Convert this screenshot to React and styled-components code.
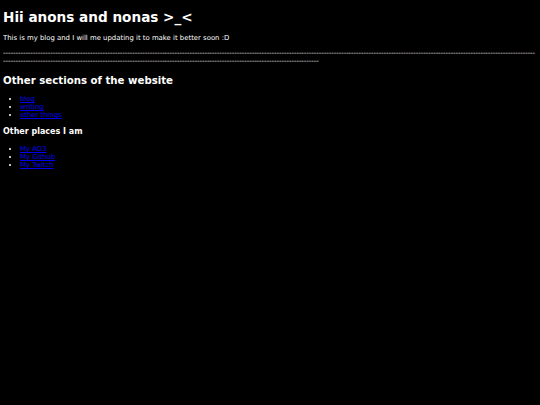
import * as React from 'react';
import styled, { createGlobalStyle } from 'styled-components';

const GlobalStyle = createGlobalStyle`
  html, body {
    background: #000;
  }
  body {
    margin: 3px;
    color: #fff;
    font-family: "DejaVu Sans", Verdana, sans-serif;
    font-size: 6.9px;
  }
`;

const Title = styled.h1`
  font-size: 13.6px;
  margin: 6px 0 9px;
`;

const Section = styled.h2`
  font-size: 10.2px;
  margin: 10px 0 9.2px;
`;

const SubSection = styled.h3`
  font-size: 8px;
  margin: 8px 0 9px;
`;

const Text = styled.p`
  margin: 1em 0;
`;

const Divider = styled.p`
  margin: 1em 0;
  word-break: break-all;
`;

const LinkList = styled.ul`
  margin: 1em 0;
  padding-left: 17px;
`;

const Item = styled.li`
  a {
    color: #0000ee;
  }
`;

const dashes = '-'.repeat(341);

const App = () => {
    return(
        <>
            <GlobalStyle />
            <Title>Hii anons and nonas &gt;_&lt;</Title>
            <Text>This is my blog and I will me updating it to make it better soon :D</Text>
            <Divider>{dashes}</Divider>
            <Section>Other sections of the website</Section>
            <LinkList>
                <Item><a href="#blog">blog</a></Item>
                <Item><a href="#writing">writing</a></Item>
                <Item><a href="#other">other things</a></Item>
            </LinkList>
            <SubSection>Other places I am</SubSection>
            <LinkList>
                <Item><a href="#ao3">My AO3</a></Item>
                <Item><a href="#github">My Github</a></Item>
                <Item><a href="#twitch">My Twitch</a></Item>
            </LinkList>
        </>
    )
}

export default App;
